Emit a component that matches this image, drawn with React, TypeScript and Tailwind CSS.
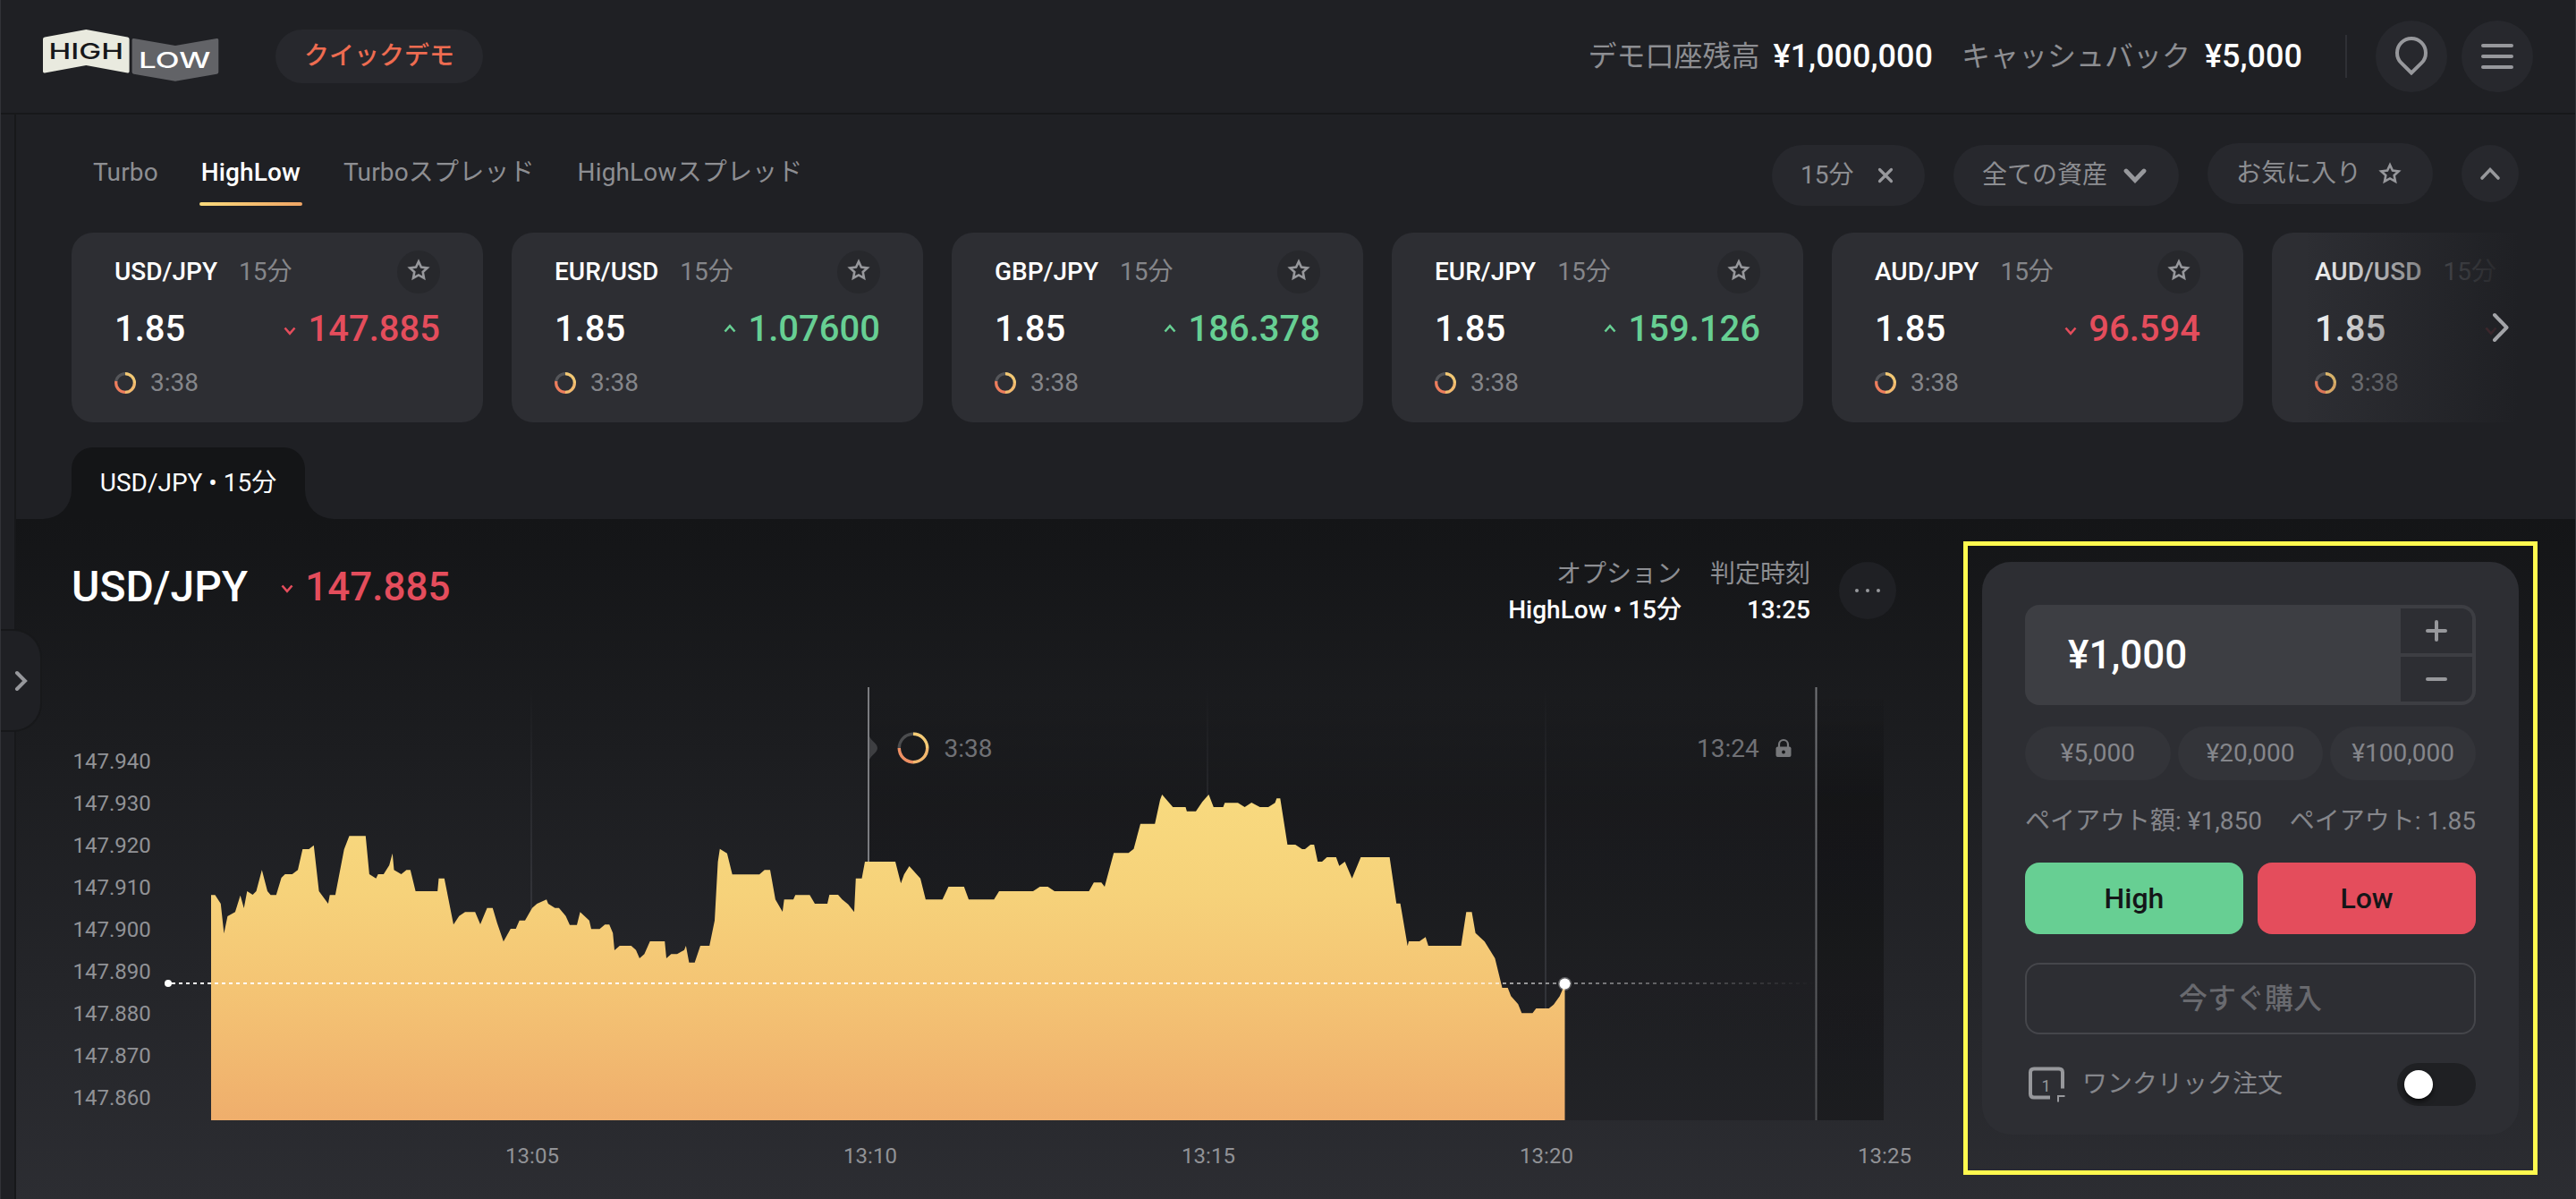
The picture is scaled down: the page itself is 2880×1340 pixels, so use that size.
import React from "react";

type Direction = "up" | "down";

interface Asset {
  pair: string;
  price?: string;
  direction: Direction;
}

const ASSETS: Asset[] = [
  { pair: "USD/JPY", price: "147.885", direction: "down" },
  { pair: "EUR/USD", price: "1.07600", direction: "up" },
  { pair: "GBP/JPY", price: "186.378", direction: "up" },
  { pair: "EUR/JPY", price: "159.126", direction: "up" },
  { pair: "AUD/JPY", price: "96.594", direction: "down" },
  { pair: "AUD/USD", direction: "down" },
];

const PRICE_LABELS = [
  "147.940", "147.930", "147.920", "147.910", "147.900", "147.890", "147.880", "147.870", "147.860",
];

const TIME_TICKS = [
  { x: 594, label: "13:05" },
  { x: 972, label: "13:10" },
  { x: 1350, label: "13:15" },
  { x: 1728, label: "13:20" },
  { x: 2106, label: "13:25" },
];

const SERIES =
  "236,1000.3 240.5,1000.3 246.8,1010 250.4,1043.3 254.4,1024 262.9,1019.3 268.7,1000.7 272.7,1015 276.3,996 282.5,1000 286.5,996 292.8,972.3 299,996 302.6,1000.3 308.8,1000.3 314.6,981 318.7,977 326.7,977 333,972.3 338.3,949 345.4,949 350.8,944.7 356.6,996 366.9,1010 368.7,1000.3 374.9,1000.3 384.7,949.3 390.5,934.3 408.8,934.3 412.9,977 420.4,981.7 422.7,977 428.9,977 435.2,967 438.8,953.7 440.5,972.3 448.6,977 454.4,972.3 458.8,972.3 464.6,996 489.2,996 490.5,981.7 496.8,981.7 507,1033.3 513.3,1023.7 520,1019.3 531.2,1019.3 537,1033 544.6,1014.7 550.8,1014.7 555.7,1031.3 562.9,1052.3 570.9,1038 576.7,1038 580.7,1028.7 587,1028.7 595,1014.7 600.4,1010 611,1005.3 612.9,1010 620.4,1014.7 624.9,1014.7 632.5,1023.7 637,1033.7 645,1033.7 648.6,1019.3 658.8,1028.7 661,1038.3 670.4,1038.3 676.3,1033.3 681.2,1033.3 685.2,1042.7 687,1062 692.8,1057 705.7,1057 711,1061.7 715,1071 720.4,1066.3 726.7,1052 743.2,1052 745,1071 750.4,1066.3 757,1066.3 765,1061.7 766.9,1057 770.4,1075.7 776.7,1075.7 783,1057 793.2,1057 799,1028.7 802.6,963.3 804.8,948.7 812.9,953.7 818.7,977.3 849,977.3 854.8,972.3 861,972.3 866.9,1005.3 874.9,1019 876.7,1005.3 887,1005.3 889.2,1000.3 905.3,1000.3 911,1010 925,1010 927.3,1000 937,1000 941.6,1005.3 948.3,1010.7 955,1019.3 956.8,981.7 963.5,981.7 967,963 1001,963 1007.2,987.3 1010.8,977.3 1016.6,968 1029,981.7 1034.9,1005.3 1053.7,1005.3 1060.4,991 1077.8,991 1083,1005.3 1111.3,1005.3 1117,996 1155,996 1162.6,991 1171.5,991 1179,996 1217.5,996 1222.9,986.3 1231.3,986.3 1235,991 1245.2,953.3 1261.7,953.3 1267.5,948.7 1275,920.7 1291.2,920.7 1297,894 1299.2,888 1311.3,902 1325.5,902 1326.9,906.7 1337,906.7 1344.3,896 1351.4,888 1356.8,902 1367.5,902 1369.3,897.3 1384,897.3 1391.6,902 1399.2,897 1408.6,902 1418,902 1425.5,897.3 1427.3,892.3 1431.3,892.3 1439.4,944 1448.2,944 1455.8,949 1459,949 1465.2,944 1469.2,944 1473.2,963 1478,963 1483.5,958 1493.8,958 1497.3,967.7 1503.6,963 1511.6,981.7 1521.4,958 1553.6,958 1561.2,1009.7 1565.6,1009.7 1573.7,1057.3 1575,1052 1587,1052 1593.8,1047.3 1596.9,1057 1633.5,1057 1639.3,1019.3 1645.5,1019.3 1649.6,1042.7 1659.8,1052.3 1671.4,1071 1679.5,1104 1685.7,1104 1689.3,1113.3 1697.3,1122.3 1701.3,1132.3 1713.4,1132.3 1717.4,1127 1731.7,1127 1737,1122.7 1743.8,1113.3 1749.5,1100";

function Logo() {
  return (
    <svg width="200" height="64" viewBox="46 32 200 64" className="shrink-0 font-[Inter,sans-serif]">
      <path d="M50 42.6 96.3 34 142.6 42.6q2 .3 2 2.2v36q0 2-2 1.600L96.300 74 50 82.400q-2 .4-2-1.600v-36q0-1.900 2-2.200Z" fill="#e9eadf" />
      <path d="M149.600 44 196 52 242.300 44q2-.4 2 1.600v36q0 1.800-2 2.100L196 91.700 149.600 83.700q-2-.3-2-2.100v-36q0-2 2-1.600Z" fill="#626367" />
      <text x="54.500" y="67" fontSize="24.500" fontWeight="500" fill="#16171a" textLength="83.500" lengthAdjust="spacingAndGlyphs">HIGH</text>
      <text x="155" y="77" fontSize="24.500" fontWeight="500" fill="#ffffff" textLength="80.500" lengthAdjust="spacingAndGlyphs">LOW</text>
    </svg>
  );
}

function Star() {
  return (
    <svg width="28" height="28" viewBox="0 0 28 28" fill="none" stroke="#97989c" strokeWidth="2.600" className="shrink-0">
      <path d="M14 4.300 16.900 10.500 23.700 11.350 18.700 16 20 22.750 14 19.400 8 22.750 9.300 16 4.300 11.350 11.100 10.500Z" />
    </svg>
  );
}

function Arrow({ direction }: { direction: Direction }) {
  return (
    <svg width="14" height="10" viewBox="0 0 14 10" fill="none" strokeWidth="2.600" className="shrink-0"
      stroke={direction === "up" ? "#67cf93" : "#e44d5c"}>
      <path d={direction === "up" ? "M1.500 8.500 7 2.200l5.500 6.300" : "M1.500 1.500 7 7.800l5.500-6.300"} />
    </svg>
  );
}

function Ring() {
  return (
    <svg width="24" height="24" viewBox="0 0 24 24" fill="none" strokeWidth="3.200" className="shrink-0">
      <circle cx="12" cy="12" r="10.400" stroke="#55565a" />
      <path d="M12 1.600A10.400 10.400 0 0 1 22.400 12" stroke="#f3c873" />
      <path d="M22.400 12A10.400 10.400 0 0 1 12 22.400" stroke="#f2b96e" />
      <path d="M12 22.400A10.400 10.400 0 0 1 1.900 10" stroke="#ef7d5c" />
    </svg>
  );
}

function AssetCard({ pair, price, direction }: Asset) {
  return (
    <article className="flex h-[212px] w-[460px] shrink-0 flex-col rounded-3xl bg-[#2d2e33] px-12 pt-5">
      <div className="flex h-12 items-center">
        <span className="text-[28px] leading-8 font-medium text-white">{pair}</span>
        <span className="ml-6 text-[28px] leading-8 text-[#85868a]">15分</span>
        <span className="ml-auto flex h-12 w-12 items-center justify-center rounded-full bg-[#27282c] pb-1">
          <Star />
        </span>
      </div>
      <div className="mt-4 flex h-12 items-center justify-between">
        <span className="text-[40px] leading-[48px] font-medium text-white">1.85</span>
        <span className={direction === "up" ? "flex items-center gap-[13px] text-[#67cf93]" : "flex items-center gap-[13px] text-[#e44d5c]"}>
          <span className={direction === "up" ? "pb-[3px]" : "pt-[3px]"}><Arrow direction={direction} /></span>
          {price ? <span className="text-[40px] leading-[48px] font-medium">{price}</span> : <span className="w-[147px]" />}
        </span>
      </div>
      <div className="mt-5 flex h-8 items-center gap-4">
        <Ring />
        <span className="text-[28px] leading-8 text-[#85868a]">3:38</span>
      </div>
    </article>
  );
}

function Header() {
  return (
    <header className="flex h-32 shrink-0 items-center border-b-2 border-[#17181a] pr-12 pl-[46px]">
      <Logo />
      <button className="ml-[62px] flex h-[60px] w-[232px] items-center justify-center rounded-full bg-[#27282d] pb-px text-[28px] leading-8 font-medium text-[#ee6c51]">
        クイックデモ
      </button>
      <div className="ml-auto flex items-center leading-10">
        <span className="text-[32px] text-[#8d8e92]">デモ口座残高</span>
        <span className="ml-[15px] text-[36px] font-medium text-white">¥1,000,000</span>
        <span className="ml-8 text-[32px] text-[#8d8e92]">キャッシュバック</span>
        <span className="ml-4 text-[36px] font-medium text-white">¥5,000</span>
        <span className="ml-12 h-12 w-0.5 bg-[#2f3035]" />
        <button className="ml-8 flex h-20 w-20 items-center justify-center rounded-full bg-[#27282d]">
          <svg width="40" height="46" viewBox="0 0 40 46" fill="none" stroke="#97989c" strokeWidth="4">
            <path d="M20 41.500 8.500 30.200A16 16 0 1 1 31.500 30.200Z" />
          </svg>
        </button>
        <button className="ml-4 flex h-20 w-20 flex-col items-center justify-center gap-2 rounded-full bg-[#27282d]">
          <span className="h-1 w-9 rounded-sm bg-[#97989c]" />
          <span className="h-1 w-9 rounded-sm bg-[#97989c]" />
          <span className="h-1 w-9 rounded-sm bg-[#97989c]" />
        </button>
      </div>
    </header>
  );
}

function FilterBar() {
  return (
    <div className="flex h-[132px] shrink-0 items-start pr-16 pl-[86px] text-[28px] leading-8 text-[#8d8e92]">
      <nav className="flex items-start gap-12 pt-12 tracking-[0.15px]">
        <span className="pt-px">Turbo</span>
        <span className="flex flex-col pt-px font-medium text-white">
          HighLow
          <span className="-mx-0.5 mt-[17px] h-1 rounded-sm bg-gradient-to-r from-[#f9da7b] to-[#efa565]" />
        </span>
        <span className="pt-px">Turboスプレッド</span>
        <span className="pt-px">HighLowスプレッド</span>
      </nav>
      <div className="ml-auto flex items-start gap-8 pt-8">
        <button className="mt-0.5 flex h-[68px] w-[171px] items-center justify-between rounded-full bg-[#27282d] pr-[34px] pl-8">
          15分
          <svg width="20" height="20" viewBox="0 0 20 20" fill="none" stroke="#97989c" strokeWidth="3.200" strokeLinecap="round"><path d="M3.500 3.500l13 13M16.500 3.500l-13 13" /></svg>
        </button>
        <button className="mt-0.5 flex h-[68px] w-[252px] items-center justify-between rounded-full bg-[#27282d] pr-9 pl-8">
          全ての資産
          <svg width="26" height="18" viewBox="0 0 26 18" fill="none" stroke="#97989c" strokeWidth="4.800" strokeLinecap="round"><path d="M3 4l10 10.500L23 4" /></svg>
        </button>
        <button className="flex h-[68px] w-[252px] items-center justify-between rounded-full bg-[#27282d] pr-[34px] pl-8">
          お気に入り
          <Star />
        </button>
        <button className="mt-0.5 flex h-16 w-16 items-center justify-center rounded-full bg-[#27282d]">
          <svg width="24" height="16" viewBox="0 0 24 16" fill="none" stroke="#97989c" strokeWidth="3.600" strokeLinecap="round"><path d="M3 13l9-9.500 9 9.500" /></svg>
        </button>
      </div>
    </div>
  );
}

function AssetStrip() {
  return (
    <div className="relative mr-16 ml-[62px] flex shrink-0 gap-8 overflow-hidden">
      {ASSETS.map((a) => (
        <AssetCard key={a.pair} {...a} />
      ))}
      <div className="absolute inset-y-0 right-0 flex w-60 items-center justify-end bg-gradient-to-r from-[#1f2024]/0 to-[#1f2024] pr-[10px]">
        <svg width="20" height="36" viewBox="0 0 20 36" fill="none" stroke="#a3a4a8" strokeWidth="4" strokeLinecap="round" strokeLinejoin="round"><path d="M3 4l13.500 14L3 32" /></svg>
      </div>
    </div>
  );
}

function AssetTab() {
  return (
    <div className="flex h-[108px] shrink-0 items-end pl-[62px]">
      <div className="relative flex h-20 w-[261px] items-center justify-center rounded-t-3xl bg-[#141517]">
        <svg className="absolute bottom-0 -left-8" width="32" height="32"><path d="M32 0v32H0A32 32 0 0 0 32 0Z" fill="#141517" /></svg>
        <span className="text-[28px] leading-8 text-white">USD/JPY • 15分</span>
        <svg className="absolute -right-8 bottom-0" width="32" height="32"><path d="M0 0v32h32A32 32 0 0 1 0 0Z" fill="#141517" /></svg>
      </div>
    </div>
  );
}

function Chart() {
  return (
    <svg width="2177" height="648" viewBox="18 692 2177 648" className="block shrink-0">
      <defs>
        <linearGradient id="area" x1="0" y1="888" x2="0" y2="1252" gradientUnits="userSpaceOnUse">
          <stop offset="0" stopColor="#f8da7f" />
          <stop offset="0.300" stopColor="#f6d27a" />
          <stop offset="0.600" stopColor="#f4c474" />
          <stop offset="1" stopColor="#efae6c" />
        </linearGradient>
        <linearGradient id="shade" x1="0" y1="768" x2="0" y2="900" gradientUnits="userSpaceOnUse">
          <stop offset="0" stopColor="#000" stopOpacity="0" />
          <stop offset="1" stopColor="#000" stopOpacity="0.180" />
        </linearGradient>
        <linearGradient id="grid" x1="0" y1="768" x2="0" y2="1000" gradientUnits="userSpaceOnUse">
          <stop offset="0" stopColor="#323338" stopOpacity="0" />
          <stop offset="1" stopColor="#323338" />
        </linearGradient>
        <linearGradient id="level" x1="188" y1="0" x2="2030" y2="0" gradientUnits="userSpaceOnUse">
          <stop offset="0" stopColor="#fff" />
          <stop offset="0.700" stopColor="#fff" />
          <stop offset="0.820" stopColor="#fff" stopOpacity="0.550" />
          <stop offset="1" stopColor="#fff" stopOpacity="0" />
        </linearGradient>
        <linearGradient id="cutoff" x1="0" y1="768" x2="0" y2="1252" gradientUnits="userSpaceOnUse">
          <stop offset="0" stopColor="#737478" />
          <stop offset="1" stopColor="#4c4d50" />
        </linearGradient>
      </defs>
      <rect x="972" y="768" width="1134" height="484" fill="url(#shade)" />
      <rect x="2031" y="768" width="75" height="484" fill="url(#shade)" />
      {TIME_TICKS.filter((t) => t.x !== 972 && t.x !== 2106).map((t) => (
        <rect key={t.x} x={t.x - 1} y="768" width="2" height="484" fill="url(#grid)" />
      ))}
      <rect x="970" y="768" width="2" height="484" fill="#7b7c80" />
      <rect x="2029.500" y="768" width="2" height="484" fill="url(#cutoff)" />
      <path d="M972 823c2 5 9 8 9 13s-7 8-9 13Z" fill="#3e3f42" />
      <polygon points={`236,1252 ${SERIES} 1749.500,1252`} fill="url(#area)" />
      <path d="M192 1099H2030" stroke="url(#level)" strokeWidth="2" strokeDasharray="4 4" fill="none" />
      <rect x="188" y="1098" width="8" height="2" fill="#fff" />
      <circle cx="188" cy="1099" r="4" fill="#fff" />
      <circle cx="1749.500" cy="1099.500" r="7.500" fill="#fff" fillOpacity="0.300" />
      <circle cx="1749.500" cy="1099.500" r="6" fill="#fff" />

      <g fill="none" strokeWidth="3.400">
        <circle cx="1021" cy="836" r="15.700" stroke="#4b4c4e" />
        <path d="M1021 820.300a15.700 15.700 0 0 1 15.700 15.700" stroke="#f5cb75" />
        <path d="M1036.700 836a15.700 15.700 0 0 1-15.700 15.700" stroke="#f3b76d" />
        <path d="M1021 851.700a15.700 15.700 0 0 1-15.700-15.700" stroke="#ef8f62" />
      </g>
      <text x="1055.500" y="846" fontSize="28" fill="#707175">3:38</text>
      <text x="1897" y="846" fontSize="28" fill="#707175">13:24</text>
      <path d="M1989 835v-3a5 5 0 0 1 10 0v3" fill="none" stroke="#77787b" strokeWidth="2.200" />
      <rect x="1985.500" y="834.500" width="17" height="11.500" rx="2" fill="#77787b" />
      <circle cx="1994" cy="840.500" r="1.900" fill="#17181a" />

      {PRICE_LABELS.map((label, i) => (
        <text key={label} x="81.500" y={859 + i * 47} fontSize="24" fill="#919296">{label}</text>
      ))}
      {TIME_TICKS.map((t) => (
        <text key={t.label} x={t.x + 1} y="1299.500" fontSize="24" fill="#919296" textAnchor="middle">{t.label}</text>
      ))}
    </svg>
  );
}

function ChartHeader() {
  return (
    <div className="mr-[75px] ml-[62px] flex h-16 shrink-0 items-center">
      <h1 className="-mt-2 text-[48px] leading-[56px] font-medium text-white">USD/JPY</h1>
      <div className="-mt-2 ml-[37px] flex items-center gap-[13px] text-[#e44d5c]">
        <span className="pt-1"><Arrow direction="down" /></span>
        <span className="text-[44px] leading-[56px] font-medium">147.885</span>
      </div>
      <div className="ml-auto flex items-center gap-8 text-right text-[28px] leading-10">
        <div className="pt-[3px]">
          <div className="text-[#8d8e92]">オプション</div>
          <div className="font-medium text-white">HighLow • 15分</div>
        </div>
        <div className="pt-[3px]">
          <div className="text-[#8d8e92]">判定時刻</div>
          <div className="font-medium text-white">13:25</div>
        </div>
        <button className="flex h-16 w-16 items-center justify-center gap-2 rounded-full bg-[#1f2024]">
          <span className="h-1 w-1 rounded-full bg-[#97989c]" />
          <span className="h-1 w-1 rounded-full bg-[#97989c]" />
          <span className="h-1 w-1 rounded-full bg-[#97989c]" />
        </button>
      </div>
    </div>
  );
}

function OrderPanel() {
  return (
    <aside className="mt-[25px] h-[708px] w-[642px] shrink-0 border-5 border-[#fff94f] pt-[18px] pl-4">
      <div className="flex h-[640px] w-[600px] flex-col rounded-[32px] bg-[#2d2e33] px-12 pt-12">
        <div className="flex h-28 shrink-0 items-center rounded-2xl bg-[#3d3e43] p-1">
          <span className="pl-11 text-[44px] leading-[56px] font-medium text-white">¥1,000</span>
          <div className="ml-auto flex h-full w-20 flex-col gap-1">
            <button className="flex flex-1 items-center justify-center rounded-tr-xl bg-[#2d2e33]">
              <svg width="24" height="24" viewBox="0 0 24 24" stroke="#97989c" strokeWidth="4" strokeLinecap="round"><path d="M12 2v20M2 12h20" /></svg>
            </button>
            <button className="flex flex-1 items-center justify-center rounded-br-xl bg-[#2d2e33]">
              <svg width="24" height="24" viewBox="0 0 24 24" stroke="#97989c" strokeWidth="4" strokeLinecap="round"><path d="M2 12h20" /></svg>
            </button>
          </div>
        </div>
        <div className="mt-6 grid h-[60px] shrink-0 grid-cols-3 gap-2 text-[28px] leading-8 text-[#85868b]">
          {["¥5,000", "¥20,000", "¥100,000"].map((v) => (
            <button key={v} className="rounded-full bg-[#333439]">{v}</button>
          ))}
        </div>
        <div className="flex h-[92px] shrink-0 items-center justify-between text-[28px] leading-8 whitespace-nowrap text-[#85868b]">
          <span>ペイアウト額: ¥1,850</span>
          <span>ペイアウト: 1.85</span>
        </div>
        <div className="grid h-20 shrink-0 grid-cols-2 gap-4 text-[32px] leading-10 font-medium text-[#151618]">
          <button className="rounded-2xl bg-[#67cf93]">High</button>
          <button className="rounded-2xl bg-[#e44d5c]">Low</button>
        </div>
        <button className="mt-8 h-20 shrink-0 rounded-2xl border-2 border-[#45464b] text-[32px] leading-10 font-medium text-[#696a6f]">
          今すぐ購入
        </button>
        <div className="mt-8 flex h-12 items-center">
          <svg width="48" height="48" viewBox="0 0 48 48" fill="none" className="shrink-0">
            <path d="M42 28V10q0-4-4-4H10q-4 0-4 4v24q0 4 4 4h18" transform="translate(0 .5)" stroke="#97989c" strokeWidth="4" />
            <path d="M37 43.500V37h7.500" stroke="#97989c" strokeWidth="2" />
            <text x="18.500" y="32" fontSize="18" fill="#97989c">1</text>
          </svg>
          <span className="ml-4 text-[28px] leading-8 text-[#85868b]">ワンクリック注文</span>
          <span className="ml-auto flex h-12 w-[88px] items-center rounded-full bg-[#1f2023] px-2">
            <span className="h-8 w-8 rounded-full bg-white shadow-md shadow-black/60" />
          </span>
        </div>
      </div>
    </aside>
  );
}

export default function App() {
  return (
    <div className="relative flex h-[1340px] w-[2880px] flex-col overflow-hidden border-x border-[#323338] bg-[#1f2024] font-[Roboto,'Noto_Sans_CJK_JP',sans-serif]">
      <div className="-mx-px flex min-h-0 flex-1 flex-col">
        <Header />
        <div className="flex min-h-0 flex-1">
          <div className="relative z-10 w-[18px] shrink-0 border-r-2 border-[#17181a]">
            <button className="absolute top-[575px] left-px flex h-[115px] w-[46px] items-center rounded-r-[32px] border-2 border-l-0 border-[#17181a] bg-[#1f2024] pl-[14px]">
              <svg width="18" height="26" viewBox="0 0 18 26" fill="none" stroke="#97989c" strokeWidth="4" strokeLinecap="round"><path d="M4 4l9 9-9 9" /></svg>
            </button>
          </div>
          <main className="flex w-[2862px] min-w-0 flex-col">
            <FilterBar />
            <AssetStrip />
            <AssetTab />
            <section className="flex min-h-0 flex-1 bg-gradient-to-b from-[#141517] to-[#2c2d32]">
              <div className="flex w-[2177px] shrink-0 flex-col pt-12">
                <ChartHeader />
                <Chart />
              </div>
              <OrderPanel />
            </section>
          </main>
        </div>
      </div>
    </div>
  );
}
